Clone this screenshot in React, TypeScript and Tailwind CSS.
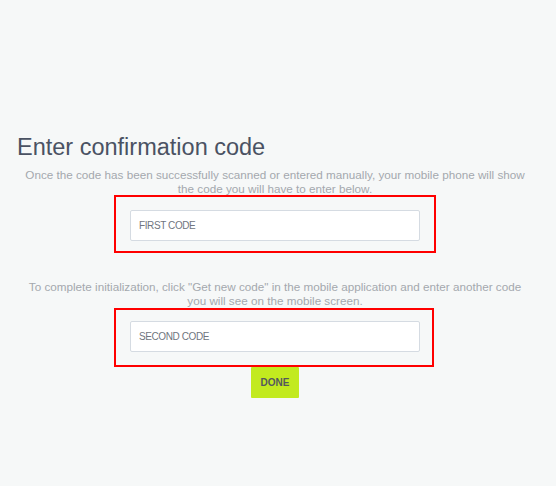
import React from "react";

export default function App() {
  return (
    <div
      className="min-h-[486px] w-full bg-[#f6f8f8] pt-[134px]"
      style={{ fontFamily: '"Liberation Sans", Arial, sans-serif' }}
    >
      <h1 className="pl-[17px] text-[23.5px] leading-[26px] text-[#4a5263] font-normal">
        Enter confirmation code
      </h1>
      <div className="w-[550px]">
        <p className="mt-[8px] px-[20px] text-center text-[11.7px] leading-[13.5px] text-[#a4a8ae]">
          Once the code has been successfully scanned or entered manually, your mobile phone will show the code you will have to enter below.
        </p>
        <div className="flex justify-center">
          <div className="w-[322px] border-2 border-[#ff0000] pl-[14px] pr-[14px] pt-[13px] pb-[10px]">
            <input
              className="block h-[31px] w-[290px] rounded-[2px] border border-[#d5dbe2] bg-white px-[8px] text-[10px] tracking-[-0.4px] uppercase text-[#5f6570] placeholder:text-[#6f7580] outline-none"
              placeholder="FIRST CODE"
            />
          </div>
        </div>
        <p className="mt-[27px] px-[20px] text-center text-[11.7px] leading-[13.5px] text-[#a4a8ae]">
          To complete initialization, click "Get new code" in the mobile application and enter another code you will see on the mobile screen.
        </p>
        <div className="mt-[1px] flex justify-center pr-[2px]">
          <div className="w-[320px] border-2 border-[#ff0000] pl-[14px] pr-[12px] pt-[11px] pb-[13px]">
            <input
              className="block h-[31px] w-[290px] rounded-[2px] border border-[#d5dbe2] bg-white px-[8px] text-[10px] tracking-[-0.4px] uppercase text-[#5f6570] placeholder:text-[#6f7580] outline-none"
              placeholder="SECOND CODE"
            />
          </div>
        </div>
        <div className="flex justify-center">
          <button className="h-[31px] w-[48px] rounded-[1px] bg-[#c2ea1f] text-[10px] font-bold text-[#54585e]">
            DONE
          </button>
        </div>
      </div>
    </div>
  );
}
